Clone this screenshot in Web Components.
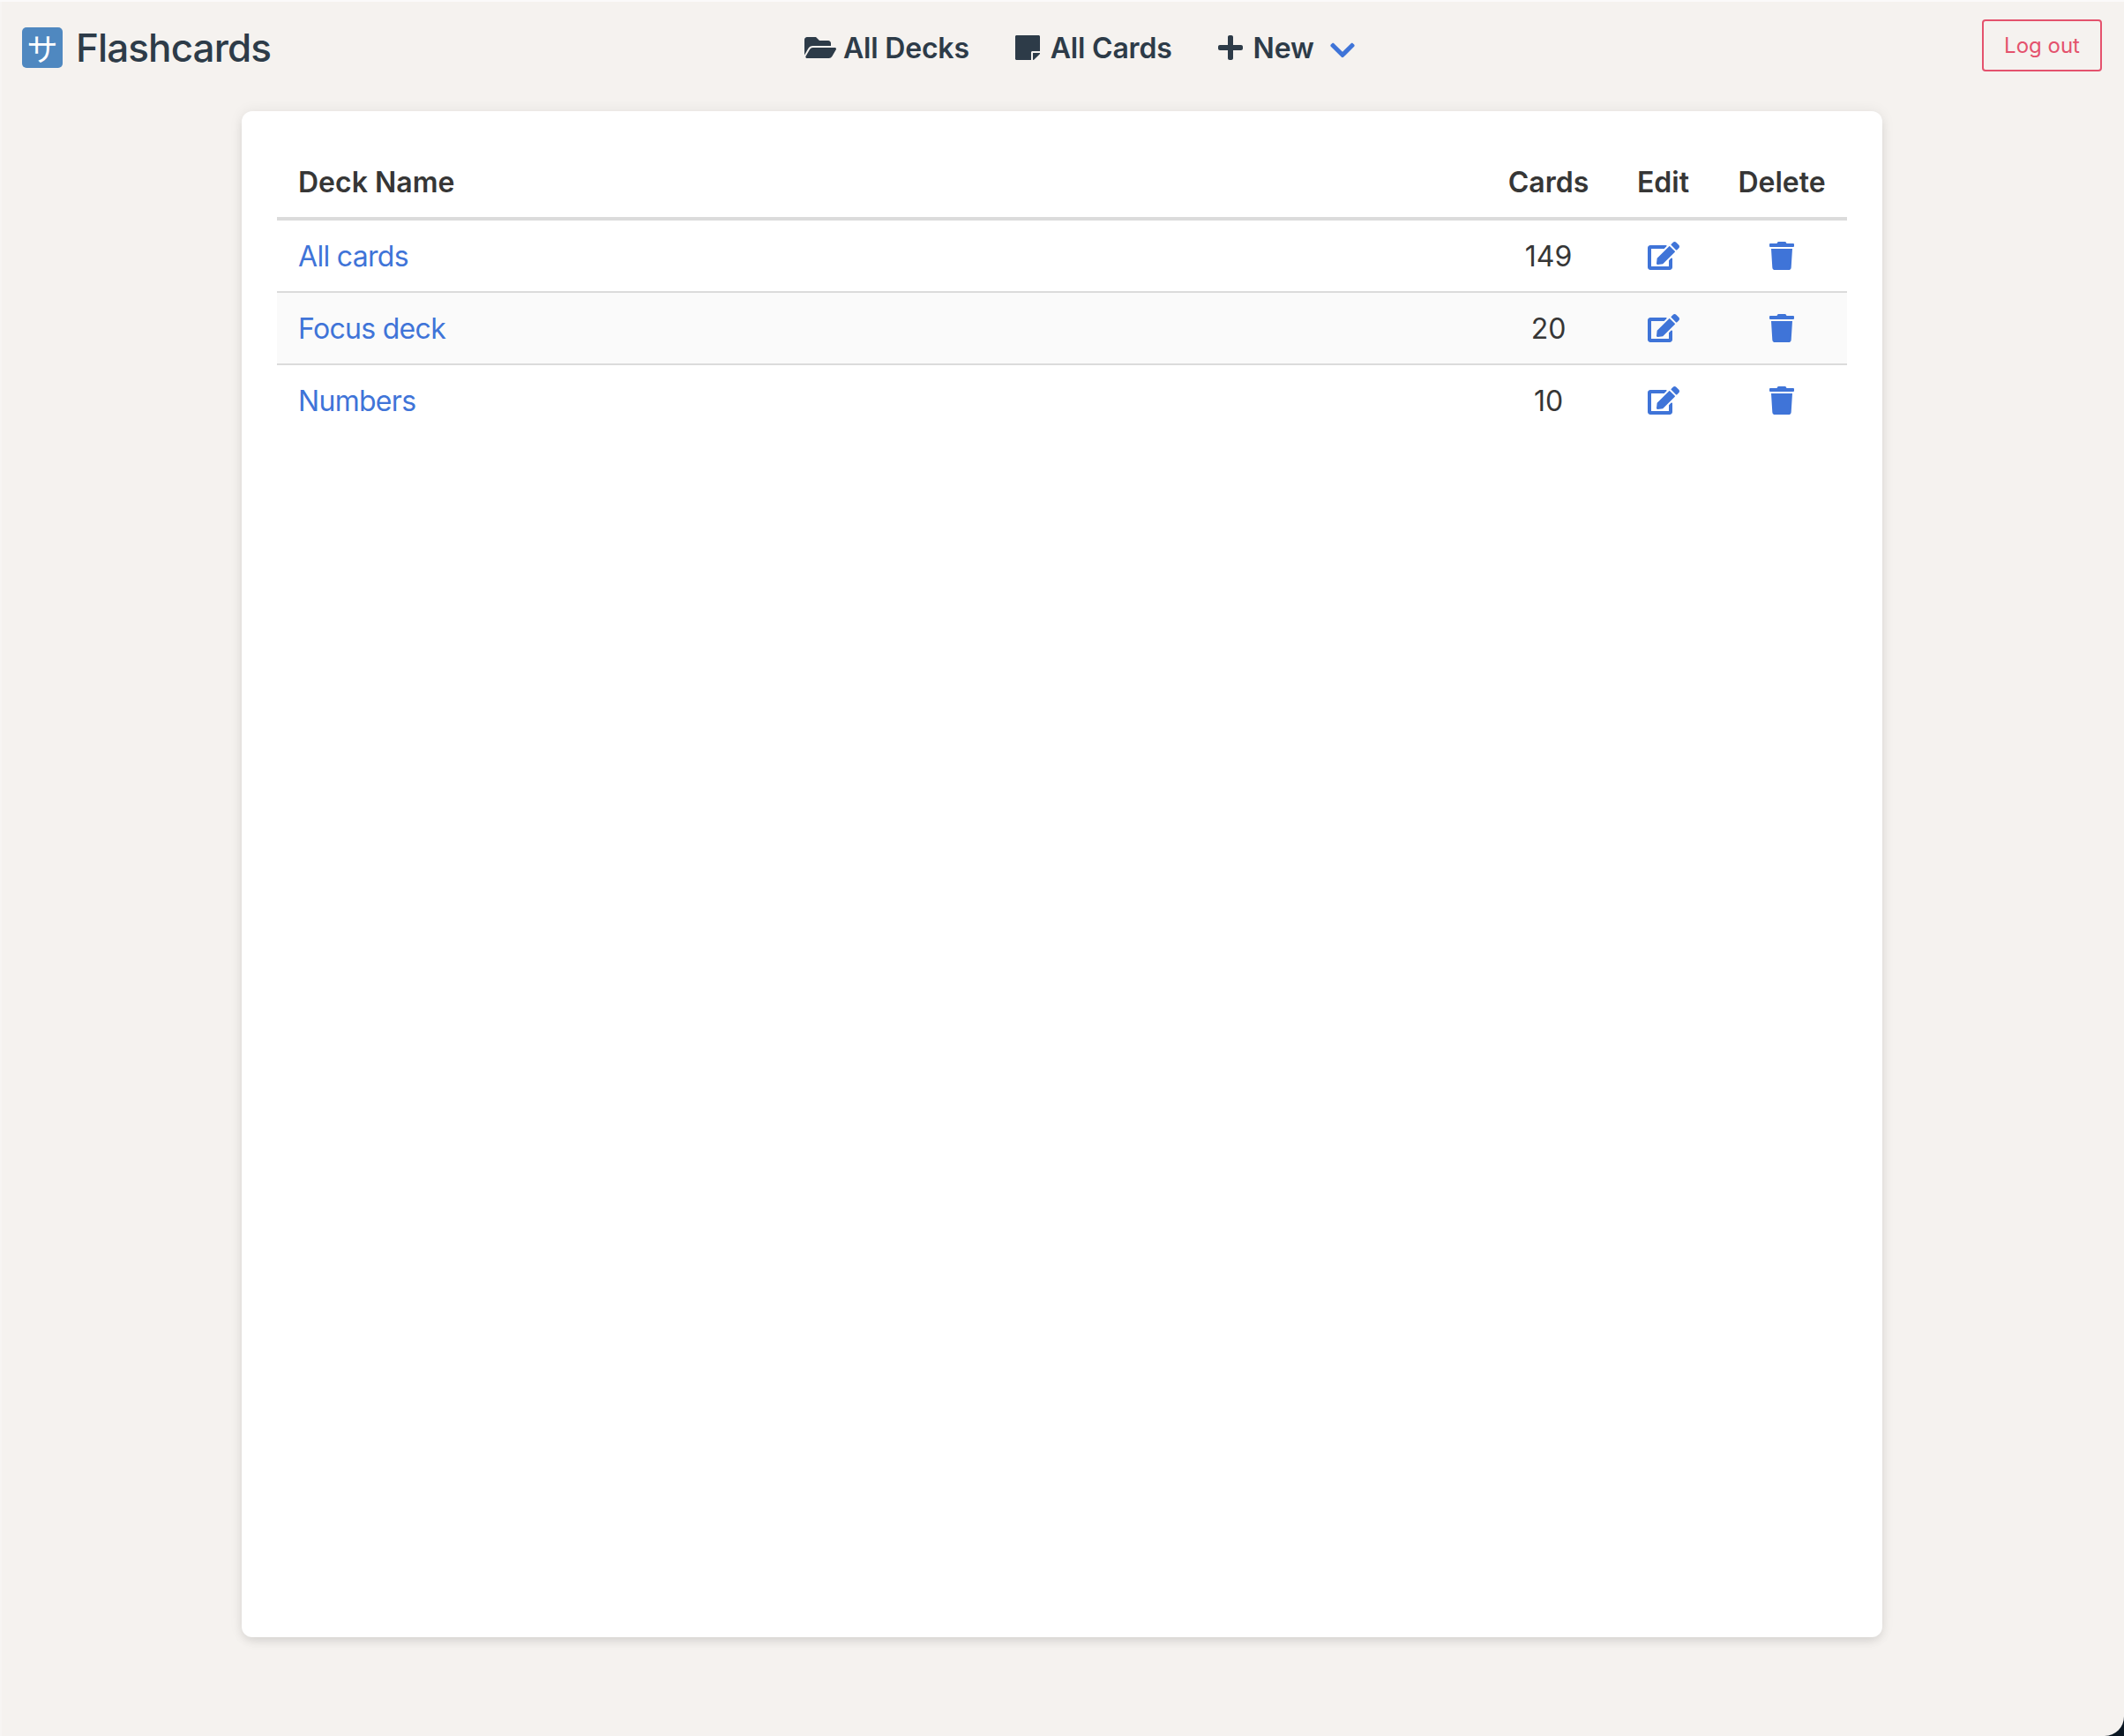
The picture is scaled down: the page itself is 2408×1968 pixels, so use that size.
<!DOCTYPE html>
<html lang="en">
<head>
<meta charset="utf-8">
<title>Flashcards</title>
<style>
html, body { margin: 0; padding: 0; background: #0b1722; }
body { font-family: Inter, "Liberation Sans", sans-serif; font-size: 32px; line-height: 48px; }
</style>
</head>
<body>
<flash-app>
  <flash-nav slot="nav">
    <flash-brand slot="brand">Flashcards</flash-brand>
    <nav-link icon="folder-open">All Decks</nav-link>
    <nav-link icon="sticky-note">All Cards</nav-link>
    <nav-link icon="plus" dropdown>New</nav-link>
    <logout-button slot="end">Log out</logout-button>
  </flash-nav>
  <deck-card>
    <deck-head></deck-head>
    <deck-row name="All cards" count="149"></deck-row>
    <deck-row name="Focus deck" count="20" striped></deck-row>
    <deck-row name="Numbers" count="10" last></deck-row>
  </deck-card>
</flash-app>

<script>
const ICONS = {
  "folder-open": ["0 0 576 512", "M572.694 292.093L500.27 416.248A63.997 63.997 0 0 1 444.989 448H45.025c-18.523 0-30.064-20.093-20.731-36.093l72.424-124.155A64 64 0 0 1 152 256h399.964c18.523 0 30.064 20.093 20.73 36.093zM152 224h328v-48c0-26.51-21.49-48-48-48H272l-64-64H48C21.49 64 0 85.49 0 112v278.046l69.077-118.418C86.214 242.25 117.989 224 152 224z"],
  "sticky-note": ["0 0 448 512", "M312 320h136V56c0-13.3-10.7-24-24-24H24C10.7 32 0 42.7 0 56v400c0 13.3 10.7 24 24 24h264V344c0-13.2 10.8-24 24-24zm129 55l-98 98c-4.5 4.5-10.6 7-17 7h-6V352h128v6.1c0 6.3-2.5 12.4-7 16.9z"],
  "plus": ["0 0 448 512", "M416 208H272V64c0-17.67-14.33-32-32-32h-32c-17.67 0-32 14.33-32 32v144H32c-17.67 0-32 14.33-32 32v32c0 17.67 14.33 32 32 32h144v144c0 17.67 14.33 32 32 32h32c17.67 0 32-14.33 32-32V304h144c17.67 0 32-14.33 32-32v-32c0-17.67-14.33-32-32-32z"],
  "chevron-down": ["0 0 448 512", "M207.029 381.476L12.686 187.132c-9.373-9.373-9.373-24.569 0-33.941l22.667-22.667c9.357-9.357 24.522-9.375 33.901-.04L224 284.505l154.745-154.021c9.379-9.335 24.544-9.317 33.901.04l22.667 22.667c9.373 9.373 9.373 24.569 0 33.941L240.971 381.476c-9.373 9.372-24.569 9.372-33.942 0z"],
  "edit": ["0 0 576 512", "M402.6 83.2l90.2 90.2c3.8 3.8 3.8 10 0 13.8L274.4 405.6l-92.8 10.3c-12.4 1.4-22.9-9.1-21.5-21.5l10.3-92.8L388.8 83.2c3.8-3.8 10-3.8 13.8 0zm162-22.9l-48.8-48.8c-15.2-15.2-39.9-15.2-55.2 0l-35.4 35.4c-3.8 3.8-3.8 10 0 13.8l90.2 90.2c3.8 3.8 10 3.8 13.8 0l35.4-35.4c15.2-15.3 15.2-40 0-55.2zM384 346.2V448H64V128h229.8c3.2 0 6.2-1.3 8.5-3.5l40-40c7.6-7.6 2.2-20.5-8.5-20.5H48C21.5 64 0 85.5 0 112v352c0 26.5 21.5 48 48 48h352c26.5 0 48-21.5 48-48V306.2c0-10.7-12.9-16-20.5-8.5l-40 40c-2.2 2.3-3.5 5.3-3.5 8.5z"],
  "trash": ["0 0 448 512", "M432 32H312l-9.4-18.7A24 24 0 0 0 281.1 0H166.8a23.72 23.72 0 0 0-21.4 13.3L136 32H16A16 16 0 0 0 0 48v32a16 16 0 0 0 16 16h416a16 16 0 0 0 16-16V48a16 16 0 0 0-16-16zM53.2 467a48 48 0 0 0 47.9 45h245.8a48 48 0 0 0 47.9-45L416 128H32z"]
};

class FaIcon extends HTMLElement {
  constructor() {
    super();
    this.attachShadow({ mode: "open" });
  }
  static get observedAttributes() {
    return ["name"];
  }
  attributeChangedCallback(name, oldValue, newValue) {
    const [box, d] = ICONS[newValue];
    this.shadowRoot.innerHTML = `
      <style>
        :host { display: inline-flex; flex: none; justify-content: center; height: 32px; }
        svg { height: 32px; display: block; fill: currentColor; }
      </style>
      <svg xmlns="http://www.w3.org/2000/svg" viewBox="${box}"><path d="${d}"/></svg>`;
  }
}
customElements.define("fa-icon", FaIcon);

const appTemplate = document.createElement("template");
appTemplate.innerHTML = `
<style>
:host {
  display: block;
  box-sizing: border-box;
  height: 1968px;
  background: #f5f2ef;
  border-top: 2px solid #fbfafa;
  border-radius: 0 0 22px 0;
  box-shadow: inset 2px 0 0 #f7f5f3;
  overflow: hidden;
}
</style>
<slot name="nav"></slot>
<slot></slot>
`;
class FlashApp extends HTMLElement {
  constructor() {
    super();
    this.attachShadow({ mode: "open" }).appendChild(appTemplate.content.cloneNode(true));
  }
}
customElements.define("flash-app", FlashApp);

const navTemplate = document.createElement("template");
navTemplate.innerHTML = `
<style>
:host {
  display: grid;
  grid-template-columns: 882px 1fr auto;
  align-items: center;
  height: 104px;
  padding: 0 25px 0 24px;
  color: #2d3b48;
}
.menu { display: flex; align-items: center; gap: 42px; }
</style>
<slot name="brand"></slot>
<div class="menu"><slot></slot></div>
<slot name="end"></slot>
`;
class FlashNav extends HTMLElement {
  constructor() {
    super();
    this.attachShadow({ mode: "open" }).appendChild(navTemplate.content.cloneNode(true));
  }
}
customElements.define("flash-nav", FlashNav);

const brandTemplate = document.createElement("template");
brandTemplate.innerHTML = `
<style>
:host { display: flex; align-items: center; gap: 15px; font-size: 44px; font-weight: 500; letter-spacing: -0.9px; }
.logo {
  display: flex; align-items: center; justify-content: center;
  width: 46px; height: 46px; margin-left: 1px;
  background: #4f88c0; border-radius: 5px;
  color: #fff; font: 400 35px/46px "Noto Sans CJK JP", sans-serif;
  letter-spacing: 0;
}
</style>
<span class="logo">サ</span>
<span><slot></slot></span>
`;
class FlashBrand extends HTMLElement {
  constructor() {
    super();
    this.attachShadow({ mode: "open" }).appendChild(brandTemplate.content.cloneNode(true));
  }
}
customElements.define("flash-brand", FlashBrand);

const linkTemplate = document.createElement("template");
linkTemplate.innerHTML = `
<style>
:host { display: flex; align-items: center; gap: 2px; font-size: 32px; font-weight: 600; letter-spacing: -0.2px; white-space: nowrap; cursor: pointer; }
.lead { width: 48px; }
.label { position: relative; top: 1px; }
.arrow { color: #3f74d8; margin-left: 16px; position: relative; top: 3px; }
</style>
<fa-icon class="lead"></fa-icon>
<span class="label"><slot></slot></span>
`;
class NavLink extends HTMLElement {
  constructor() {
    super();
    this._ShadowRoot = this.attachShadow({ mode: "open" });
    this._ShadowRoot.appendChild(linkTemplate.content.cloneNode(true));
  }
  connectedCallback() {
    this._ShadowRoot.querySelector("fa-icon").setAttribute("name", this.getAttribute("icon"));
    if (this.hasAttribute("dropdown")) {
      const arrow = document.createElement("fa-icon");
      arrow.className = "arrow";
      arrow.setAttribute("name", "chevron-down");
      this._ShadowRoot.appendChild(arrow);
    }
  }
}
customElements.define("nav-link", NavLink);

const logoutTemplate = document.createElement("template");
logoutTemplate.innerHTML = `
<style>
:host { display: block; margin-top: -5px; }
button {
  display: block;
  box-sizing: border-box;
  width: 136px; height: 59px;
  padding: 0;
  background: transparent;
  border: 2px solid #e4526d;
  border-radius: 4px;
  color: #e4526d;
  font: 400 24px/1 Inter, "Liberation Sans", sans-serif;
}
</style>
<button type="button"><slot></slot></button>
`;
class LogoutButton extends HTMLElement {
  constructor() {
    super();
    this.attachShadow({ mode: "open" }).appendChild(logoutTemplate.content.cloneNode(true));
  }
}
customElements.define("logout-button", LogoutButton);

const cardTemplate = document.createElement("template");
cardTemplate.innerHTML = `
<style>
:host {
  display: block;
  box-sizing: border-box;
  width: 1860px; height: 1730px;
  margin: 20px auto 0;
  padding: 40px;
  background: #fff;
  border-radius: 12px;
  box-shadow: 0 6px 12px -2px rgba(10,10,10,.1), 0 0 16px rgba(10,10,10,.07);
  color: #363636;
}
</style>
<slot></slot>
`;
class DeckCard extends HTMLElement {
  constructor() {
    super();
    this.attachShadow({ mode: "open" }).appendChild(cardTemplate.content.cloneNode(true));
  }
}
customElements.define("deck-card", DeckCard);

const rowStyle = `
:host {
  display: grid;
  grid-template-columns: 1fr 139px 121px 148px;
  border-bottom: 2px solid #dbdbdb;
}
:host([striped]) { background: #fafafa; }
:host([last]) { border-bottom: 0; }
.cell { padding: 16px 24px; display: flex; justify-content: center; align-items: center; height: 48px; }
.text { padding: 17px 24px 15px; }
.name { justify-content: flex-start; }
a { color: #3f74d8; text-decoration: none; display: flex; }
.deck-link { letter-spacing: -0.7px; }
`;

const headTemplate = document.createElement("template");
headTemplate.innerHTML = `
<style>${rowStyle}
:host { border-bottom-width: 4px; font-weight: 600; }
</style>
<div class="cell text name">Deck Name</div>
<div class="cell text">Cards</div>
<div class="cell text">Edit</div>
<div class="cell text">Delete</div>
`;
class DeckHead extends HTMLElement {
  constructor() {
    super();
    this.attachShadow({ mode: "open" }).appendChild(headTemplate.content.cloneNode(true));
  }
}
customElements.define("deck-head", DeckHead);

const deckRowTemplate = document.createElement("template");
deckRowTemplate.innerHTML = `
<style>${rowStyle}</style>
<div class="cell text name"><a class="deck-link" href="#"></a></div>
<div class="cell text deck-count"></div>
<div class="cell"><a href="#"><fa-icon name="edit"></fa-icon></a></div>
<div class="cell"><a href="#"><fa-icon name="trash"></fa-icon></a></div>
`;
class DeckRow extends HTMLElement {
  constructor() {
    super();
    this._ShadowRoot = this.attachShadow({ mode: "open" });
    this._ShadowRoot.appendChild(deckRowTemplate.content.cloneNode(true));
    this.$link = this._ShadowRoot.querySelector(".deck-link");
    this.$count = this._ShadowRoot.querySelector(".deck-count");
  }
  connectedCallback() {
    this.$link.textContent = this.getAttribute("name");
    this.$count.textContent = this.getAttribute("count");
  }
}
customElements.define("deck-row", DeckRow);
</script>
</body>
</html>
